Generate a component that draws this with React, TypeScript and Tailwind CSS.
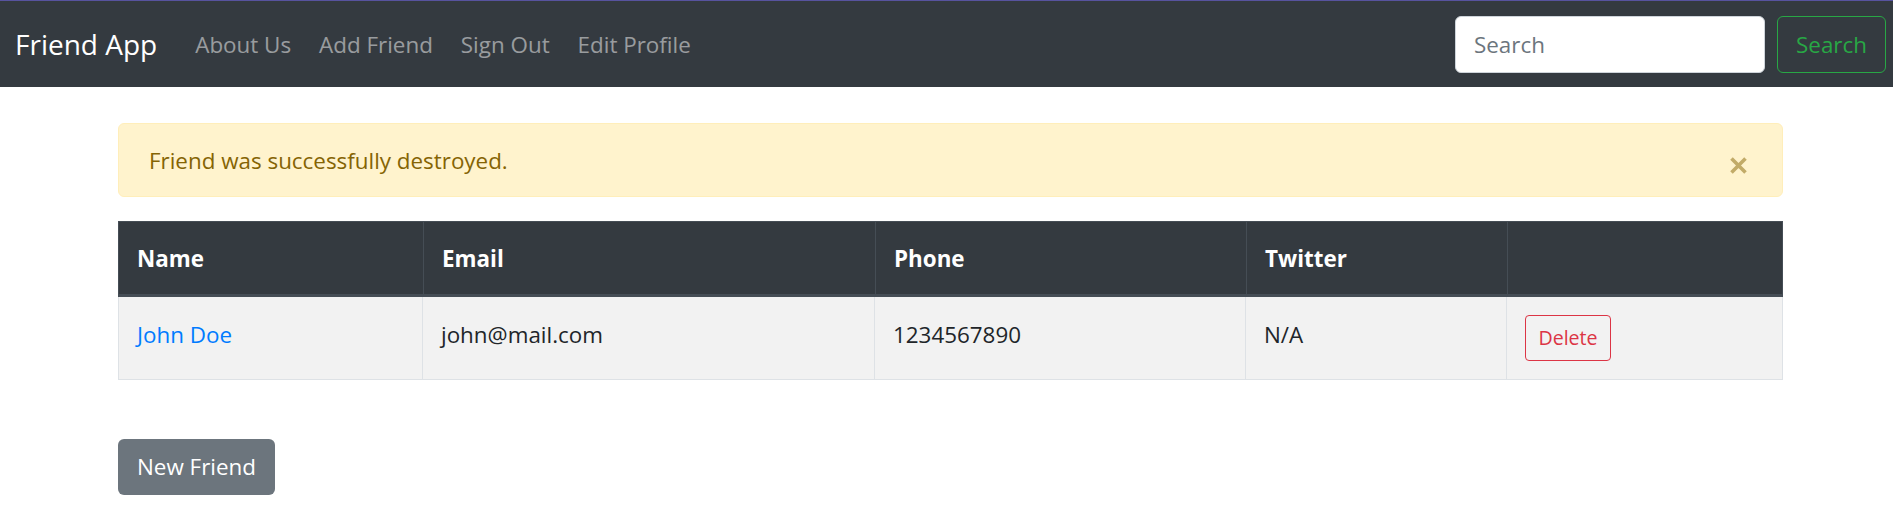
import React from "react";

const links = ["About Us", "Add Friend", "Sign Out", "Edit Profile"];

const cols = ["Name", "Email", "Phone", "Twitter", ""];

export default function App() {
  return (
    <div className="min-h-screen bg-white font-['Open_Sans',sans-serif] text-[#212529]">
      <div className="h-px bg-[#57539f]" />
      {/* Navbar */}
      <nav className="flex h-[86px] items-center bg-[#343a40] pl-[15px] pr-[7px]">
        <a href="#" className="mr-[24px] pt-px text-[28px] leading-[45px] text-white">
          Friend App
        </a>
        <ul className="flex">
          {links.map((l) => (
            <li key={l}>
              <a href="#" className="block px-[14px] pt-[2px] text-[22.4px] leading-9 text-white/50">
                {l}
              </a>
            </li>
          ))}
        </ul>
        <form className="ml-auto flex items-center" onSubmit={(e) => e.preventDefault()}>
          <input
            type="search"
            placeholder="Search"
            className="h-[57px] w-[310px] rounded-[6px] border border-[#ced4da] bg-white px-[18px] pt-px text-[22.4px] text-[#495057] outline-none placeholder:text-[#6c757d]"
          />
          <button className="ml-3 h-[57px] w-[109px] rounded-[6px] border border-[#28a745] pt-px text-[22.4px] text-[#28a745]">
            Search
          </button>
        </form>
      </nav>

      {/* Contenu */}
      <main className="pl-[118px] pt-9">
        <div className="w-[1665px]">
          <div className="mb-6 flex items-start rounded-[6px] border border-[#ffeeba] bg-[#fff3cd] pb-[17px] pt-[19px] pl-[30px] pr-[35px] text-[22.4px] leading-9 text-[#856404]">
            <span>Friend was successfully destroyed.</span>
            <button className="ml-auto mt-[14px]">
              <svg width="17" height="17" viewBox="0 0 17 17">
                <path d="M1.5 1.5 L15.5 15.5 M15.5 1.5 L1.5 15.5" stroke="#c2ab68" strokeWidth="3.6" />
              </svg>
            </button>
          </div>

          <div className="border-x border-[#dee2e6] text-[22.4px] leading-9">
            <div className="-mx-px grid grid-cols-[305px_452px_371px_261px_1fr] border-x border-t border-b-[3px] border-[#454d55] bg-[#343a40] font-bold text-white">
              {cols.map((c, i) => (
                <div
                  key={i}
                  className={`h-[72px] px-[18px] pb-[17px] pt-[19px] ${i < 4 ? "border-r border-[#454d55]" : ""}`}
                >
                  {c}
                </div>
              ))}
            </div>
            <div className="grid grid-cols-[304px_452px_371px_261px_1fr] border-b border-[#dee2e6] bg-[#f2f2f2]">
              <div className="border-r border-[#dee2e6] px-[18px] pt-[20px]">
                <a href="#" className="text-[#007bff]">John Doe</a>
              </div>
              <div className="border-r border-[#dee2e6] px-[18px] pt-[20px]">john@mail.com</div>
              <div className="border-r border-[#dee2e6] px-[18px] pt-[20px]">1234567890</div>
              <div className="border-r border-[#dee2e6] px-[18px] pt-[20px]">N/A</div>
              <div className="p-[18px]">
                <button className="h-[45.5px] w-[86px] rounded-[4px] border border-[#dc3545] pt-px text-[19.6px] text-[#dc3545]">
                  Delete
                </button>
              </div>
            </div>
          </div>

          <button className="mt-[59px] h-[56px] w-[157px] rounded-[6px] bg-[#6c757d] pt-px text-[22.4px] text-white">
            New Friend
          </button>
        </div>
      </main>
    </div>
  );
}
